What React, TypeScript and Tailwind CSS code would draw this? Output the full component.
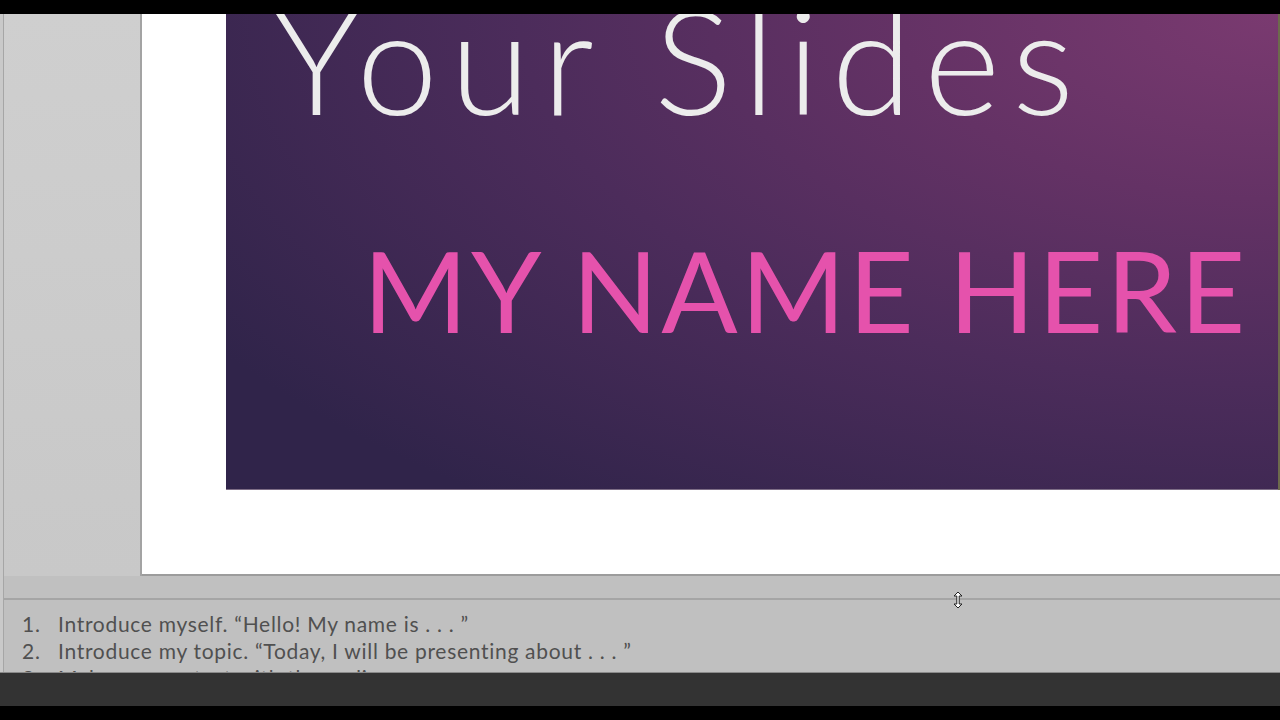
import React from 'react';

const notes = [
  'Introduce myself. \u201cHello! My name is . . . \u201d',
  'Introduce my topic. \u201cToday, I will be presenting about . . . \u201d',
  'Make eye contact with the audience',
];

// little up/down resize cursor over the splitter
function ResizeCursor() {
  return (
    <svg width="10" height="18" viewBox="0 0 10 18" className="absolute left-[949px] top-[15px]">
      <path
        d="M5 1 L9 5 L6.2 5 L6.2 13 L9 13 L5 17 L1 13 L3.8 13 L3.8 5 L1 5 Z"
        fill="#fff"
        stroke="#222"
        strokeWidth="1"
        strokeLinejoin="round"
      />
    </svg>
  );
}

export default function App() {
  return (
    <div className="flex h-[720px] w-[1280px] flex-col overflow-hidden bg-black">
      {/* top letterbox */}
      <div className="h-[14px] shrink-0 bg-black" />

      <div className="flex h-[658px] shrink-0">
        {/* window edge */}
        <div className="w-[4px] shrink-0 border-r border-[#a6a6a6] bg-[#c9c9c9]" />

        <div className="flex min-w-0 flex-1 flex-col">
          {/* editor area */}
          <div className="flex h-[562px] shrink-0">
            <div className="w-[138px] shrink-0 border-r-2 border-[#a3a3a3] bg-gradient-to-b from-[#cfcfcf] to-[#c8c8c8]" />
            <div className="flex min-w-0 flex-1 flex-col border-b-2 border-[#9c9c9c] bg-white pl-[84px]">
              <div className="flex h-[476px] shrink-0">
                <div className="relative flex flex-1 flex-col overflow-hidden border-b border-[#7d6d86] bg-[radial-gradient(ellipse_120%_130%_at_100%_0%,#7a3a70_0%,#643265_30%,#4c2c5b_60%,#30244a_100%)]">
                  <div
                    className="mt-[-28px] whitespace-nowrap pl-[47px] text-[146px] font-light leading-none tracking-[12px] text-[#ececec]"
                    style={{ fontFamily: 'Lato, "Open Sans", sans-serif' }}
                  >
                    Your Slides
                  </div>
                  <div
                    className="mt-[101px] whitespace-nowrap pl-[137px] text-[113px] font-normal leading-none tracking-[3px] text-[#e552ac]"
                    style={{ fontFamily: 'Lato, "Open Sans", sans-serif' }}
                  >
                    MY NAME HERE
                  </div>
                </div>
                <div className="w-[2px] shrink-0 bg-[#6d6a4c]" />
              </div>
            </div>
          </div>

          {/* splitter */}
          <div className="relative h-[24px] shrink-0 border-b-2 border-[#a5a5a5] bg-[#c0c0c0]">
            <ResizeCursor />
          </div>

          {/* notes pane */}
          <div
            className="flex-1 overflow-hidden bg-[#c0c0c0] pl-[18px] pt-[10px] text-[21px] leading-[27px] tracking-[0.7px] text-[#505050]"
            style={{ fontFamily: 'Lato, "Liberation Sans", sans-serif' }}
          >
            {notes.map((n, i) => (
              <div key={i} className="flex whitespace-nowrap">
                <span className="w-[36px] shrink-0">{i + 1}.</span>
                <span>{n}</span>
              </div>
            ))}
          </div>
        </div>
      </div>

      {/* player bar */}
      <div className="h-[34px] shrink-0 border-t border-[#8a8a8a] bg-[#333333]" />
      <div className="flex-1 bg-black" />
    </div>
  );
}
